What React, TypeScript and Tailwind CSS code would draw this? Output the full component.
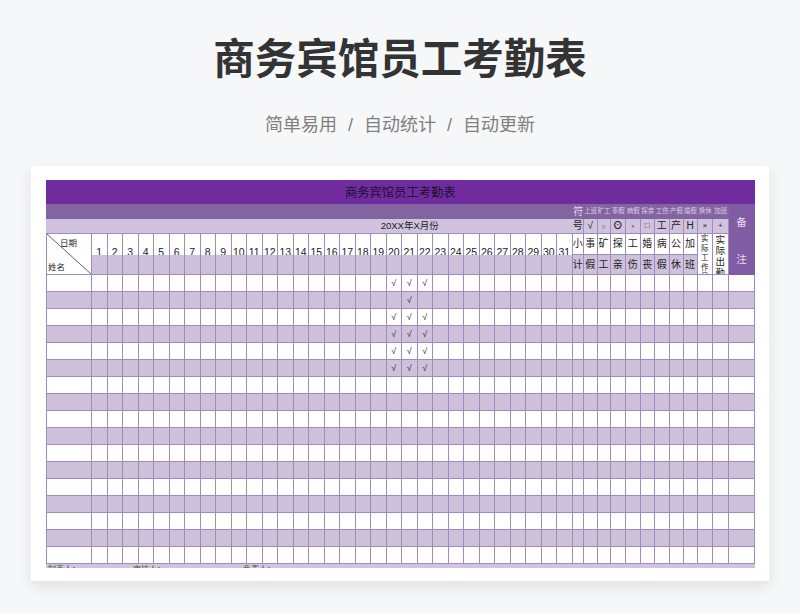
import React from "react";

const days = Array.from({ length: 31 }, (_, i) => i + 1);
const rows = Array.from({ length: 17 }, (_, i) => i);
const extras = [0, 1, 2, 3, 4, 5, 6, 7, 8, 9, 10, 11];
const labels = ["上班", "旷工", "事假", "病假", "探亲", "工伤", "产假", "婚假", "换休", "加班"];
const symbols = ["号", "√", "○", "⊙", "●", "□", "工", "产", "H", "×", "+"];
const base = "text-[10px] text-[#222222]";
const symbolStyle = [
  base,
  base,
  "text-[7px] text-[#444444]",
  "text-[10px] font-bold text-[#222222]",
  "text-[6px] text-[#8a7a9c]",
  "text-[8px] text-[#444444]",
  base,
  base,
  base,
  "text-[8px] text-[#222222]",
  "text-[8px] text-[#222222]",
];
const upper = ["小", "事", "矿", "探", "工", "婚", "病", "公", "加"];
const lower = ["计", "假", "工", "亲", "伤", "丧", "假", "休", "班"];
const line = "border-r border-b border-[#a08cbc]";

function hasCheck(row: number, day: number) {
  if (row === 1) return day === 21;
  return row <= 5 && day >= 20 && day <= 22;
}

export default function App() {
  return (
    <div className="w-[800px] h-[613px] overflow-hidden bg-[#f5f7f9] font-['Liberation_Sans','Noto_Sans_CJK_SC',sans-serif]">
      <h1 className="pt-[30px] h-[91px] text-center text-[41.5px] leading-[60px] font-bold text-[#333333]">商务宾馆员工考勤表</h1>
      <p className="mt-[21px] h-[54px] flex justify-center gap-[11px] text-[18px] leading-[26px] text-[#808080]">
        <span>简单易用</span><span>/</span><span>自动统计</span><span>/</span><span>自动更新</span>
      </p>
      <div className="ml-[31px] w-[738px] h-[415px] bg-white pt-[14px] pl-[15px] shadow-[0_6px_14px_rgba(0,0,0,0.09)]">
        <div className="grid w-[709px] h-[388px] overflow-hidden text-black grid-cols-[46px_repeat(31,15.5px)_11.5px_13.5px_13px_15.5px_14.5px_14.5px_14.5px_14px_14px_15.5px_15.5px_26px] grid-rows-[24px_15px_15px_21px_20px_repeat(17,17px)_4px]">
          {/* title bar */}
          <div className="col-span-full flex items-center justify-center pt-[2px] bg-[#702c9e] text-[12.3px] leading-none text-[#1c1030]">商务宾馆员工考勤表</div>

          {/* legend row */}
          <div className="col-[1/33] bg-[#8264a0]" />
          <div className="flex items-center justify-center bg-[#8264a0] text-[10px] leading-none text-[#e2d9ec]">符</div>
          {labels.map((l) => (
            <div key={l} className="flex items-center justify-center overflow-hidden whitespace-nowrap bg-[#8264a0] text-[6.5px] leading-none text-[#d9cde6]">{l}</div>
          ))}
          <div className="col-start-[44] row-[2/6] flex flex-col items-center gap-[21px] pt-[10px] bg-[#7f5ca3] text-[10.5px] leading-[16px] text-[#e6dcef]">
            <span>备</span>
            <span>注</span>
          </div>

          {/* month row */}
          <div className="col-[1/12] bg-[#d0c3de] border-b border-[#a08cbc]" />
          <div className="col-[12/33] flex items-center justify-center bg-[#d0c3de] border-b border-[#a08cbc] text-[9.5px] text-[#222222]">20XX年X月份</div>
          {symbols.map((s, i) => (
            <div key={i} className={`flex items-center justify-center bg-[#d0c3de] ${line} leading-none ${symbolStyle[i]}`}>{s}</div>
          ))}

          {/* diagonal header */}
          <div className="relative row-[4/6] flex flex-col justify-between bg-white border-b border-r border-l border-[#a08cbc] pl-[1px] text-[8.5px] leading-[12px] text-[#222222]">
            <span className="pl-[12px] pt-[3px]">日期</span>
            <span className="pb-[1px]">姓名</span>
            <svg className="absolute inset-0 w-full h-full" viewBox="0 0 46 41" preserveAspectRatio="none">
              <path d="M0 0L46 41" stroke="#3a3048" strokeWidth="0.8" fill="none" />
            </svg>
          </div>

          {/* day numbers */}
          {days.map((d) => (
            <div key={d} className="overflow-hidden flex items-end justify-center bg-white border-r border-[#a08cbc] text-[10.5px] leading-[11px] text-[#222222]">
              <span className="translate-y-[3px]">{d}</span>
            </div>
          ))}
          {upper.map((s, i) => (
            <div key={i} className={`flex items-center justify-center bg-white ${line} text-[10px] leading-none text-[#222222]`}>{s}</div>
          ))}
          <div className={`col-start-[42] row-[4/6] overflow-hidden flex flex-col items-center bg-white ${line} text-[7.5px] leading-[9.5px] text-[#222222]`}>
            <span>实</span><span>际</span><span>工</span><span>作</span><span>日</span>
          </div>
          <div className={`col-start-[43] row-[4/6] overflow-hidden flex flex-col items-center bg-white ${line} text-[9.5px] leading-[11px] text-[#222222]`}>
            <span>实</span><span>际</span><span>出</span><span>勤</span>
          </div>

          {/* purple header row */}
          {days.map((d) => (
            <div key={d} className={`bg-[#cdc1dc] ${line}`} />
          ))}
          {lower.map((s, i) => (
            <div key={i} className={`flex items-center justify-center bg-[#cdc1dc] ${line} text-[10px] leading-none text-[#222222]`}>{s}</div>
          ))}

          {/* body */}
          {rows.map((r) => (
            <React.Fragment key={r}>
              <div className={`${r % 2 ? "bg-[#cdc1dc]" : "bg-white"} ${line} border-l`} />
              {days.map((d) => (
                <div key={d} className={`flex items-center justify-center ${r % 2 ? "bg-[#cdc1dc]" : "bg-white"} ${line} text-[9px] leading-none text-[#333333]`}>
                  {hasCheck(r, d) ? "√" : ""}
                </div>
              ))}
              {extras.map((e) => (
                <div key={e} className={`${r % 2 ? "bg-[#cdc1dc]" : "bg-white"} ${line}`} />
              ))}
            </React.Fragment>
          ))}

          {/* clipped footer strip */}
          <div className="col-span-full overflow-hidden flex bg-[#d0c3de] text-[8px] leading-[12px] text-[#555555]">
            <span className="ml-[2px] w-[85px]">制表人：</span>
            <span className="w-[110px]">审核人：</span>
            <span>负责人：</span>
          </div>
        </div>
      </div>
    </div>
  );
}
